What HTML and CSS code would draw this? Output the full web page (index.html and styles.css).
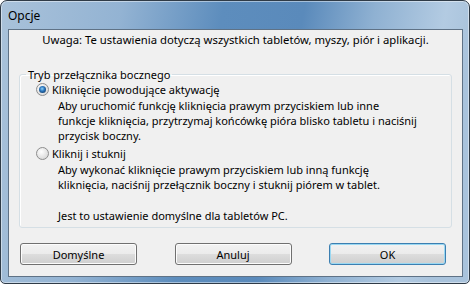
FILE: index.html
```html
<!DOCTYPE html>
<html lang="pl">
  <head>
    <meta charset="UTF-8" />
    <title>Opcje</title>
    <link rel="stylesheet" href="styles.css">
  </head>
  <body>
    <div class="window">
      <div class="titlebar">Opcje</div>

      <div class="client">
        <p class="notice">
          Uwaga: Te ustawienia dotyczą wszystkich tabletów, myszy, piór i aplikacji.
        </p>

        <fieldset class="group">
          <legend>Tryb przełącznika bocznego</legend>

          <label class="option">
            <span class="radio checked"></span>Kliknięcie powodujące aktywację
          </label>
          <p class="desc">
            Aby uruchomić funkcję kliknięcia prawym przyciskiem lub inne<br />
            funkcje kliknięcia, przytrzymaj końcówkę pióra blisko tabletu i naciśnij<br />
            przycisk boczny.
          </p>

          <label class="option second">
            <span class="radio"></span>Kliknij i stuknij
          </label>
          <p class="desc">
            Aby wykonać kliknięcie prawym przyciskiem lub inną funkcję<br />
            kliknięcia, naciśnij przełącznik boczny i stuknij piórem w tablet.
          </p>
          <p class="desc note">Jest to ustawienie domyślne dla tabletów PC.</p>
        </fieldset>

        <div class="buttons">
          <button class="btn">Domyślne</button>
          <button class="btn">Anuluj</button>
          <button class="btn default">OK</button>
        </div>
      </div>
    </div>
  </body>
</html>
```

FILE: styles.css
```css
* {
  box-sizing: border-box;
}

body {
  margin: 0;
  width: 470px;
  height: 284px;
  overflow: hidden;
  background: #ffffff;
  font-family: "Segoe UI", "Noto Sans", sans-serif;
  font-size: 11px;
  color: #000;
}

/* window frame (aero glass) */
.window {
  width: 470px;
  height: 284px;
  display: flex;
  flex-direction: column;
  border: 1px solid #2f3b47;
  border-radius: 7px 7px 5px 5px;
  background: linear-gradient(
    100deg,
    #a9c2da 0px,
    #93b3d3 120px,
    #5d8dbd 220px,
    #5a8abb 300px,
    #8fb1d2 370px,
    #b3cbe2 440px,
    #a9c3dc 470px
  );
  box-shadow: inset 0 0 0 1px rgba(255, 255, 255, 0.45);
}

.titlebar {
  height: 28px;
  padding: 7px 0 0 7px;
  line-height: 15px;
  font-size: 12px;
  color: #000;
}

.client {
  flex: 1;
  margin: 0 6px 6px 7px;
  border: 1px solid #5f7286;
  background: #f0f0f0;
  padding: 2px 0 0 0;
  display: flex;
  flex-direction: column;
}

.notice {
  margin: 0;
  line-height: 15px;
  font-size: 11.3px;
  text-align: center;
}

/* group box */
.group {
  margin: 20px 10px 0 10px;
  padding: 0 8px 4px 16px;
  border: 1px solid #d5dfe5;
  border-radius: 3px;
  box-shadow: inset 1px 1px 0 #fff;
}

.group legend {
  margin-left: -10px;
  padding: 0 2px;
  line-height: 15px;
}

.option {
  display: flex;
  align-items: center;
  line-height: 15px;
}

.option.second {
  margin-top: 3px;
}

.radio {
  width: 13px;
  height: 13px;
  margin-right: 3px;
  border-radius: 50%;
  border: 1px solid #8d8d8d;
  background: radial-gradient(circle at 40% 35%, #ffffff 0, #e9e9e9 45%, #cfcfcf 100%);
  display: flex;
  align-items: center;
  justify-content: center;
}

.radio.checked::after {
  content: "";
  width: 7px;
  height: 7px;
  border-radius: 50%;
  background: radial-gradient(circle at 45% 40%, #8fd2f7 0, #2c77bf 40%, #12406f 80%);
}

.desc {
  margin: 1px 0 0 22px;
  line-height: 15px;
  white-space: nowrap;
}

.desc.note {
  margin-top: 16px;
}

/* buttons */
.buttons {
  display: flex;
  justify-content: space-between;
  margin-top: 15px;
  padding: 0 16px 0 11px;
}

.btn {
  width: 117px;
  height: 22px;
  padding: 0;
  font-family: inherit;
  font-size: 11px;
  color: #000;
  border: 1px solid #707070;
  border-radius: 3px;
  background: linear-gradient(#f2f2f2 0, #ebebeb 50%, #dddddd 50%, #cfcfcf 100%);
  box-shadow: inset 0 0 0 1px #fcfcfc;
}

.btn.default {
  border-color: #3c7fb1;
  box-shadow: inset 0 0 0 1px #9ad8f2;
}
```
